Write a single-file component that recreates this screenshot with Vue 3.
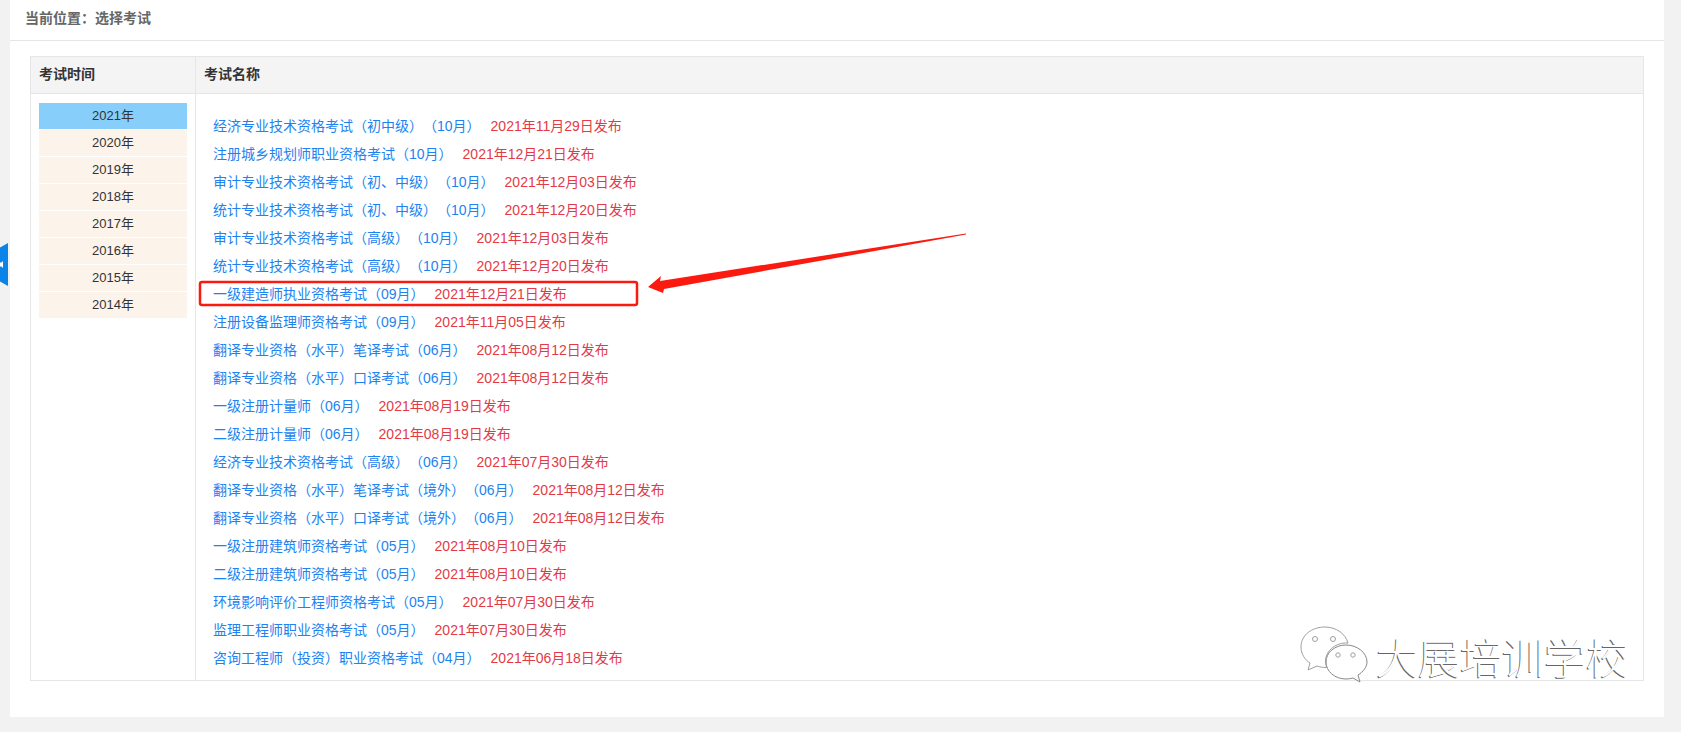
<script setup>
const years = [2021, 2020, 2019, 2018, 2017, 2016, 2015, 2014]
const exams = [
  ['经济专业技术资格考试（初中级）（10月）', '2021年11月29日发布'],
  ['注册城乡规划师职业资格考试（10月）', '2021年12月21日发布'],
  ['审计专业技术资格考试（初、中级）（10月）', '2021年12月03日发布'],
  ['统计专业技术资格考试（初、中级）（10月）', '2021年12月20日发布'],
  ['审计专业技术资格考试（高级）（10月）', '2021年12月03日发布'],
  ['统计专业技术资格考试（高级）（10月）', '2021年12月20日发布'],
  ['一级建造师执业资格考试（09月）', '2021年12月21日发布'],
  ['注册设备监理师资格考试（09月）', '2021年11月05日发布'],
  ['翻译专业资格（水平）笔译考试（06月）', '2021年08月12日发布'],
  ['翻译专业资格（水平）口译考试（06月）', '2021年08月12日发布'],
  ['一级注册计量师（06月）', '2021年08月19日发布'],
  ['二级注册计量师（06月）', '2021年08月19日发布'],
  ['经济专业技术资格考试（高级）（06月）', '2021年07月30日发布'],
  ['翻译专业资格（水平）笔译考试（境外）（06月）', '2021年08月12日发布'],
  ['翻译专业资格（水平）口译考试（境外）（06月）', '2021年08月12日发布'],
  ['一级注册建筑师资格考试（05月）', '2021年08月10日发布'],
  ['二级注册建筑师资格考试（05月）', '2021年08月10日发布'],
  ['环境影响评价工程师资格考试（05月）', '2021年07月30日发布'],
  ['监理工程师职业资格考试（05月）', '2021年07月30日发布'],
  ['咨询工程师（投资）职业资格考试（04月）', '2021年06月18日发布'],
]
</script>

<template>
  <div class="page">
    <main class="panel">
      <div class="crumb">当前位置：选择考试</div>
      <div class="body">
        <section class="table">
          <div class="head">
            <div class="col-time">考试时间</div>
            <div class="col-name">考试名称</div>
          </div>
          <div class="rows">
            <ul class="years">
              <li v-for="(y, i) in years" :key="y" :class="{ active: i === 0 }">{{ y }}年</li>
            </ul>
            <ul class="exams">
              <li v-for="e in exams" :key="e[0]">
                <a>{{ e[0] }}</a><span>{{ e[1] }}</span>
              </li>
            </ul>
          </div>
        </section>
      </div>
    </main>

    <div class="side-tab">
      <svg width="8" height="43" viewBox="0 0 8 43">
        <path d="M0 4.500 8 0V43L0 38.500Z" fill="#0a84e8" />
        <path d="M0 19.500H1.500L3 18V25L1.500 23.500H0Z" fill="#fff" />
      </svg>
    </div>

    <svg class="annot" width="1681" height="732" viewBox="0 0 1681 732">
      <rect x="200" y="282" width="437" height="23" rx="2" fill="none" stroke="#fb1a10" stroke-width="2.5" />
      <path d="M648 287 661 276 660 281 966 233.500 966 234.500 664 289 663 293Z" fill="#fb1a10" />
    </svg>

    <div class="mark">
      <svg width="69" height="58" viewBox="0 0 69 58">
        <g fill="#fff" stroke="#a0a0a0" stroke-width="1">
          <path d="M25 1C12 1 1 9 1 21c0 7 4 13 9 16l-2 7 9-4c3 1 6 1.500 8 1.500 .5 0 1 0 1.500 0C26 39 25.500 37 25.500 35c0-10 10-18 20-18 1 0 2 0 2.500 .2C46 8 36 1 25 1Z" />
          <path d="M46 19c-11 0-20 7.500-20 17s9 17 20 17c2.500 0 5-.4 7-1l7 4-2-7c5-3 9-8 9-13 0-9.500-10-17-21-17Z" stroke="#888" />
          <circle cx="15" cy="13" r="2.500" />
          <circle cx="33" cy="13" r="2.500" />
          <circle cx="38" cy="29" r="2.200" />
          <circle cx="53" cy="29" r="2.200" />
        </g>
      </svg>
      <span>大展培训学校</span>
    </div>
  </div>
</template>

<style scoped>
.page {
  position: relative;
  height: 732px;
  padding: 0 17px 15px 10px;
  box-sizing: border-box;
  background: #f2f2f2;
  font-family: "Liberation Sans", "Noto Sans CJK SC", sans-serif;
  font-size: 14px;
  overflow: hidden;
  text-spacing-trim: space-all;
}
.panel {
  height: 100%;
  background: #fff;
}
.crumb {
  height: 41px;
  padding-left: 15px;
  box-sizing: border-box;
  border-bottom: 1px solid #e6e6e6;
  color: #666;
  font-weight: 700;
  line-height: 37px;
}
.body {
  padding: 15px 20px 0;
}
.table {
  border: 1px solid #e6e6e6;
  height: 625px;
  box-sizing: border-box;
}
.head {
  display: flex;
  height: 37px;
  box-sizing: border-box;
  background: #f4f4f4;
  border-bottom: 1px solid #e6e6e6;
  color: #333;
  font-weight: 700;
  line-height: 35px;
}
.col-time {
  width: 165px;
  flex: none;
  box-sizing: border-box;
  padding-left: 8px;
  border-right: 1px solid #e6e6e6;
}
.col-name {
  padding-left: 8px;
}
.rows {
  display: flex;
  height: 586px;
}
ul {
  list-style: none;
  margin: 0;
  padding: 0;
}
.years {
  width: 165px;
  flex: none;
  box-sizing: border-box;
  padding: 9px 8px 0;
  border-right: 1px solid #e6e6e6;
}
.years li {
  height: 26px;
  margin-bottom: 1px;
  background: #fcf3eb;
  color: #333;
  font-size: 13px;
  line-height: 25px;
  text-align: center;
}
.years li.active {
  background: #87cefa;
}
.exams {
  padding: 18px 0 0 17px;
}
.exams li {
  height: 28px;
  line-height: 28px;
  white-space: nowrap;
}
.exams a {
  color: #1e82f0;
}
.exams span {
  margin-left: 10px;
  color: #e23a46;
}
.side-tab {
  position: absolute;
  left: 0;
  top: 243px;
  line-height: 0;
}
.annot {
  position: absolute;
  left: 0;
  top: 0;
  pointer-events: none;
}
.mark {
  position: absolute;
  left: 1300px;
  top: 626px;
  display: flex;
  align-items: flex-start;
  gap: 7px;
}
.mark span {
  margin-top: 5px;
  color: #fff;
  font-family: "Noto Sans CJK SC", sans-serif;
  font-size: 42px;
  font-weight: 300;
  line-height: 50px;
  text-shadow: -1px 1px 0 #666;
}
</style>
